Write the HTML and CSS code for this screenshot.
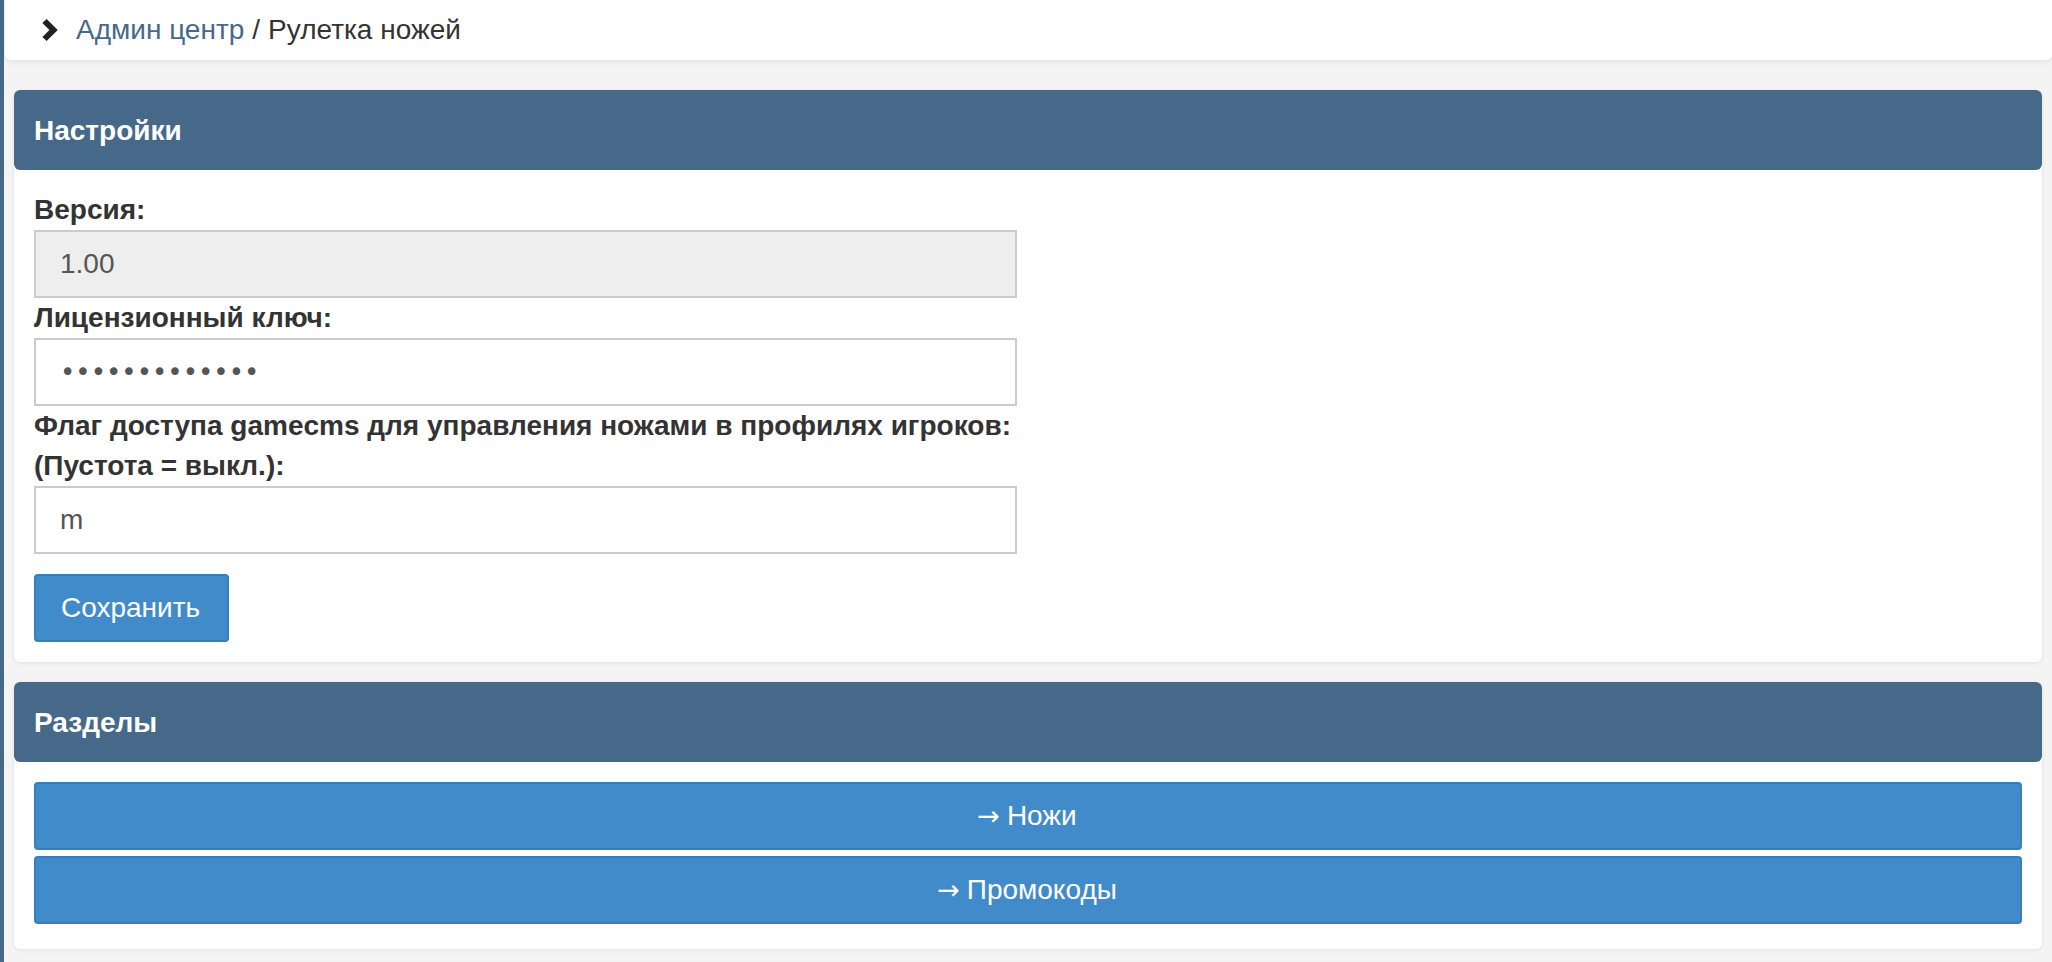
FILE: index.html
```html
<!DOCTYPE html>
<html lang="ru">
<head>
<meta charset="utf-8">
<title>Рулетка ножей</title>
<link rel="stylesheet" href="styles.css">
</head>
<body>
<div class="layout">
  <div class="strip"></div>
  <main class="content">
    <nav class="crumbs">
      <svg class="chev" width="17" height="24" viewBox="0 0 17 24" aria-hidden="true">
        <path d="M3.5 3 L12.5 12 L3.5 21" fill="none" stroke="#222" stroke-width="6" stroke-linejoin="miter" stroke-miterlimit="4"/>
      </svg>
      <a href="#" class="crumb-link">Админ центр</a><span class="crumb-sep">/</span><span class="crumb-cur">Рулетка ножей</span>
    </nav>

    <section class="card">
      <div class="card-head">Настройки</div>
      <form class="card-body">
        <label class="lbl">Версия:</label>
        <input class="field field-off" type="text" value="1.00" disabled>
        <label class="lbl">Лицензионный ключ:</label>
        <input class="field field-pass" type="password" value="abcdefghijklm">
        <label class="lbl">Флаг доступа gamecms для управления ножами в профилях игроков:<br>(Пустота = выкл.):</label>
        <input class="field" type="text" value="m">
        <div class="actions">
          <button type="button" class="btn">Сохранить</button>
        </div>
      </form>
    </section>

    <section class="card">
      <div class="card-head">Разделы</div>
      <div class="card-body sections">
        <a href="#" class="btn btn-block"><span class="arrow">→</span><span class="btn-text">Ножи</span></a>
        <a href="#" class="btn btn-block"><span class="arrow">→</span><span class="btn-text">Промокоды</span></a>
      </div>
    </section>
  </main>
</div>
</body>
</html>
```

FILE: styles.css
```css
html, body {
  margin: 0;
  padding: 0;
}

body {
  background: #f4f4f4;
  font-family: "Liberation Sans", Arial, sans-serif;
  font-size: 28px;
  line-height: 40px;
  color: #333;
  min-height: 100vh;
}

.layout {
  display: flex;
  min-height: 100vh;
}

.strip {
  width: 4px;
  flex: none;
  background: #46698a;
}

.content {
  flex: 1;
  min-width: 0;
}

.crumbs {
  display: flex;
  align-items: center;
  height: 60px;
  margin-left: 1px;
  padding-left: 36px;
  background: #fff;
  border-radius: 0 0 6px 6px;
  box-shadow: 0 2px 5px rgba(0, 0, 0, 0.07);
  margin-bottom: 30px;
}

.chev {
  flex: none;
  margin-right: 18px;
}

.crumb-link {
  color: #46698a;
  text-decoration: none;
}

.crumb-sep {
  color: #333;
  margin: 0 8px;
}

.crumb-cur {
  color: #333;
}

.card {
  margin: 0 10px 20px 10px;
  background: #fff;
  border-radius: 6px;
  box-shadow: 0 1px 4px rgba(0, 0, 0, 0.08);
}

.card-head {
  background: #46698a;
  color: #fff;
  font-weight: bold;
  height: 80px;
  box-sizing: border-box;
  padding: 21px 20px 19px;
  border-radius: 6px;
}

.card-body {
  padding: 20px 20px 20px;
  margin: 0;
}

.lbl {
  display: block;
  font-weight: bold;
  color: #333;
}

.field {
  display: block;
  box-sizing: border-box;
  width: 983px;
  height: 68px;
  margin: 0;
  padding: 0 24px;
  border: 2px solid #ccc;
  border-radius: 0;
  background: #fff;
  font-family: "Liberation Sans", Arial, sans-serif;
  font-size: 28px;
  color: #555;
  outline: none;
}

.field-off {
  background: #eee;
  color: #555;
  -webkit-text-fill-color: #555;
  opacity: 1;
}

.field-pass {
  font-family: "DejaVu Sans", sans-serif;
  font-size: 26px;
  padding-left: 24px;
  color: #555;
}

.actions {
  margin-top: 20px;
}

.btn {
  display: inline-flex;
  align-items: center;
  justify-content: center;
  box-sizing: border-box;
  height: 68px;
  padding: 0 27px 0 25px;
  border: 2px solid #357ebd;
  border-radius: 4px;
  background: #428bca;
  color: #fff;
  font-family: "Liberation Sans", Arial, sans-serif;
  font-size: 28px;
  text-decoration: none;
  cursor: pointer;
}

.arrow {
  font-family: "DejaVu Sans", sans-serif;
  font-size: 27px;
  margin-right: 7px;
}

.sections {
  display: flex;
  flex-direction: column;
  gap: 6px;
  padding-bottom: 25px;
}

.btn-block {
  display: flex;
  width: 100%;
}
```
